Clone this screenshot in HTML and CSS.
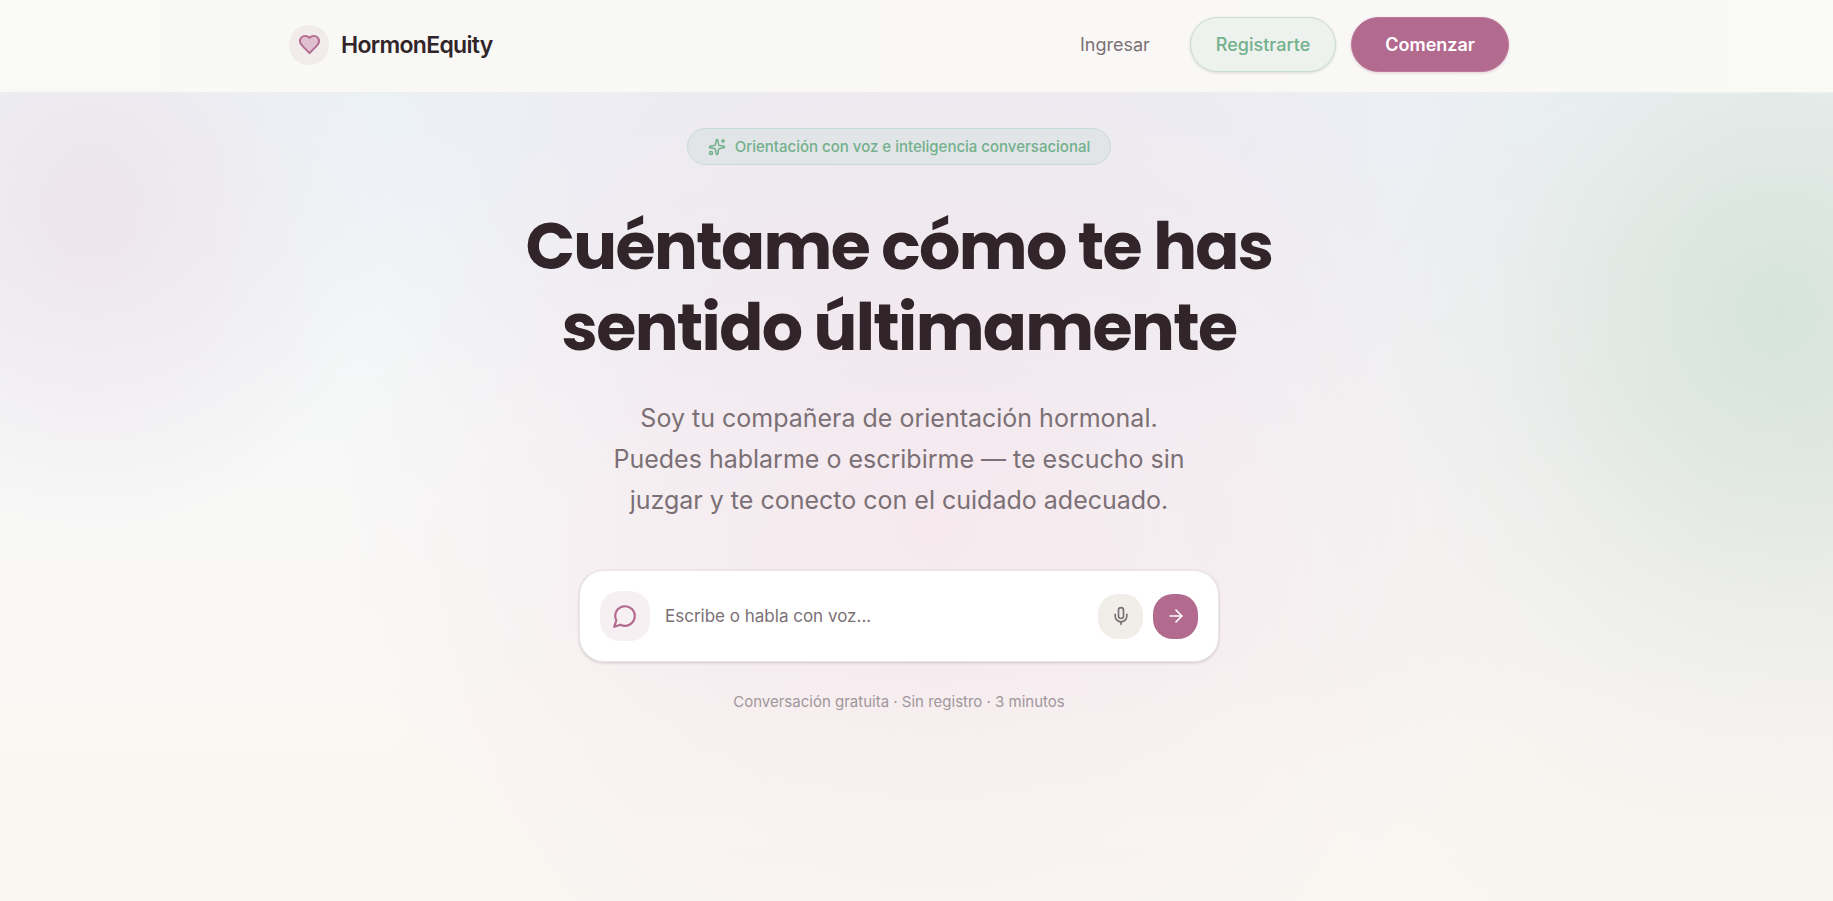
FILE: index.html
```html
<!DOCTYPE html>
<html lang="es">
<head>
    <meta charset="UTF-8">
    <meta name="viewport" content="width=device-width, initial-scale=1.0">
    <title>HormonEquity</title>
    <link rel="stylesheet" href="styles.css">
</head>
<body>
    <header class="header">
        <div class="header-inner">
            <a class="brand" href="#">
                <span class="brand-icon">
                    <svg width="23" height="23" viewBox="0 0 24 24"><path d="M19 14c1.490-1.460 3-3.210 3-5.500A5.500 5.500 0 0 0 16.500 3c-1.760 0-3 .5-4.500 2-1.500-1.500-2.740-2-4.500-2A5.500 5.500 0 0 0 2 8.500c0 2.300 1.500 4.050 3 5.500l7 7Z"/></svg>
                </span>
                <span>HormonEquity</span>
            </a>
            <nav class="nav">
                <a class="nav-link" href="#">Ingresar</a>
                <a class="btn btn-outline" href="#">Registrarte</a>
                <a class="btn btn-primary" href="#">Comenzar</a>
            </nav>
        </div>
    </header>

    <main class="hero">
        <p class="badge">
            <svg width="18" height="18" viewBox="0 0 24 24"><path d="M11.017 2.814a1 1 0 0 1 1.966 0l1.051 5.558a2 2 0 0 0 1.594 1.594l5.558 1.051a1 1 0 0 1 0 1.966l-5.558 1.051a2 2 0 0 0-1.594 1.594l-1.051 5.558a1 1 0 0 1-1.966 0l-1.051-5.558a2 2 0 0 0-1.594-1.594l-5.558-1.051a1 1 0 0 1 0-1.966l5.558-1.051a2 2 0 0 0 1.594-1.594z"/><path d="M20 2v4"/><path d="M22 4h-4"/><circle cx="4" cy="20" r="2"/></svg>
            <span>Orientación con voz e inteligencia conversacional</span>
        </p>
        <h1 class="title">Cuéntame cómo te has<br>sentido últimamente</h1>
        <p class="lead">Soy tu compañera de orientación hormonal.<br>Puedes hablarme o escribirme — te escucho sin<br>juzgar y te conecto con el cuidado adecuado.</p>

        <form class="chat">
            <label class="chat-icon" for="message" aria-label="Mensaje">
                <svg width="26" height="26" viewBox="0 0 24 24"><path d="M7.900 20A9 9 0 1 0 4 16.100L2 22Z"/></svg>
            </label>
            <input class="chat-input" id="message" type="text" placeholder="Escribe o habla con voz...">
            <div class="chat-actions">
                <button class="round-btn mic" type="button" aria-label="Hablar">
                    <svg width="20" height="20" viewBox="0 0 24 24"><rect x="9" y="2" width="6" height="13" rx="3"/><path d="M19 10v2a7 7 0 0 1-14 0v-2"/><path d="M12 19v3"/></svg>
                </button>
                <button class="round-btn send" type="submit" aria-label="Enviar">
                    <svg width="20" height="20" viewBox="0 0 24 24"><path d="M5 12h14"/><path d="m12 5 7 7-7 7"/></svg>
                </button>
            </div>
        </form>

        <p class="note">Conversación gratuita · Sin registro · 3 minutos</p>
    </main>
</body>
</html>
```
FILE: styles.css
```css
:root {
    --rose: #b36a8f;
    --green: #73b08c;
    --ink: #32252a;
    --muted: #7b7075;
    --gutter: 35px;
}
* {
    box-sizing: border-box;
}
body {
    margin: 0;
    min-height: 100vh;
    display: flex;
    flex-direction: column;
    font-family: Inter, "Liberation Sans", sans-serif;
    color: var(--ink);
    background: #faf7f3;
}
svg {
    flex-shrink: 0;
    fill: none;
    stroke: currentColor;
    stroke-width: 2;
    stroke-linecap: round;
    stroke-linejoin: round;
}
a {
    color: inherit;
    text-decoration: none;
}

/* header */
.header {
    padding: 17px calc(24px + var(--gutter)) 20px 24px;
    background: linear-gradient(90deg, #f9f9f6, #f9f8f6 60%, #f9f9f6);
    border-bottom: 1px solid #efeeeb;
}
.header-inner {
    display: flex;
    align-items: center;
    justify-content: space-between;
    max-width: 1220px;
    margin: 0 auto;
}
.brand {
    display: flex;
    align-items: center;
    gap: 12px;
    font-size: 23px;
    font-weight: 600;
    letter-spacing: -0.03em;
}
.brand-icon {
    display: flex;
    align-items: center;
    justify-content: center;
    width: 40px;
    height: 40px;
    border-radius: 50%;
    background: #f2ebec;
    color: var(--rose);
}
.brand-icon path {
    fill: #dfc0d0;
}
.nav {
    display: flex;
    align-items: center;
    gap: 15px;
    font-size: 18px;
    font-weight: 500;
}
.nav-link {
    margin-right: 25px;
    color: var(--muted);
    font-weight: 400;
}
.btn {
    padding: 0 25px;
    border: 1px solid;
    border-radius: 28px;
    line-height: 53px;
}
.btn-outline {
    color: var(--green);
    background: #edf2ee;
    border-color: #c9ddd2;
    box-shadow: 0 1px 3px rgba(50, 37, 42, 0.15);
}
.btn-primary {
    padding: 0 33px;
    color: #fff;
    font-weight: 600;
    background: var(--rose);
    border-color: #bb7899;
    box-shadow: 0 1px 3px rgba(179, 106, 143, 0.3);
}

/* hero */
.hero {
    flex: 1;
    display: flex;
    flex-direction: column;
    align-items: center;
    padding: 35px calc(24px + var(--gutter)) 40px 24px;
    text-align: center;
    background:
        linear-gradient(rgba(249, 245, 241, 0) 70%, rgba(249, 245, 241, 0.7)),
        radial-gradient(ellipse 400px 420px at 97% 27%, rgba(210, 227, 217, 0.85), rgba(216, 228, 220, 0.6) 35%, rgba(226, 231, 227, 0.25) 70%, rgba(232, 234, 230, 0)),
        radial-gradient(ellipse 300px 330px at 5% 14%, rgba(236, 224, 232, 0.75), rgba(237, 227, 234, 0.5) 45%, rgba(240, 232, 238, 0)),
        radial-gradient(ellipse 600px 580px at 51% 54%, rgba(245, 229, 236, 0.75), rgba(243, 231, 237, 0.6) 45%, rgba(243, 232, 237, 0)),
        radial-gradient(ellipse 680px 440px at 51% 0, rgba(235, 234, 241, 0.9), rgba(236, 234, 241, 0.7) 50%, rgba(236, 234, 240, 0)),
        radial-gradient(ellipse 700px 600px at 100% 42%, rgba(230, 230, 228, 0.7), rgba(236, 234, 231, 0)),
        linear-gradient(#ecf4f8, #f8f8f7 50%, #fbf8f4 80%, #faf7f3);
}
.badge {
    display: flex;
    align-items: center;
    gap: 9px;
    margin: 0 0 41px;
    padding: 0 20px;
    border: 1px solid #c9dcd3;
    border-radius: 19px;
    background: #e1e5e7;
    color: var(--green);
    font-size: 15px;
    font-weight: 500;
    line-height: 35px;
}
.title {
    margin: 0;
    font-family: Poppins, Inter, sans-serif;
    font-size: 65px;
    font-weight: 700;
    line-height: 81px;
    letter-spacing: -0.025em;
}
.lead {
    margin: 30px 0 49px;
    color: var(--muted);
    font-size: 25px;
    line-height: 41px;
}
.chat {
    display: flex;
    align-items: center;
    gap: 15px;
    width: 100%;
    max-width: 640px;
    padding: 20px;
    border: 1px solid #ece5e6;
    border-radius: 25px;
    background: #fff;
    box-shadow: 0 1px 3px rgba(50, 37, 42, 0.2);
}
.chat-icon {
    display: flex;
    align-items: center;
    justify-content: center;
    width: 50px;
    height: 50px;
    border-radius: 20px;
    background: #f6f0f2;
    color: var(--rose);
}
.chat-input {
    flex: 1;
    min-width: 0;
    padding: 0;
    border: 0;
    outline: 0;
    background: none;
    color: var(--ink);
    font: 400 17px Inter, "Liberation Sans", sans-serif;
}
.chat-input::placeholder {
    color: var(--muted);
    opacity: 1;
}
.chat-actions {
    display: flex;
    gap: 10px;
}
.round-btn {
    display: flex;
    align-items: center;
    justify-content: center;
    width: 45px;
    height: 45px;
    padding: 0;
    border: 0;
    border-radius: 20px;
    cursor: pointer;
}
.mic {
    background: #f1eeea;
    color: var(--muted);
}
.send {
    background: var(--rose);
    color: #fff;
}
.note {
    margin: 30px 0 0;
    color: #a0969b;
    font-size: 15px;
    line-height: 20px;
}
```
